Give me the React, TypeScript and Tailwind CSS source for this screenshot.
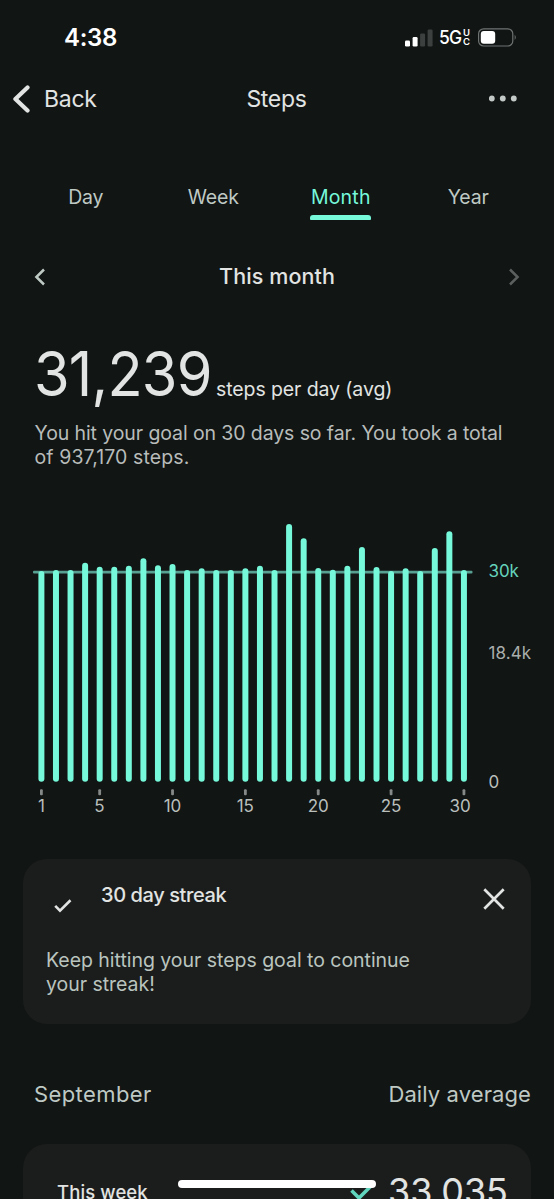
const tops = [
  571, 570, 570, 562.7, 566.7, 566.7, 565.7, 558.3, 565.3, 564, 570, 568.3, 570, 570, 568.3,
  565.7, 570, 524, 538.3, 568, 569.7, 565.7, 547, 567, 571, 568.3, 571, 548, 531.3, 570,
];
const barX = (day: number) => 41.4 + 14.57 * (day - 1);
const dayTicks = [
  { day: 1, x: 41.4 },
  { day: 5, x: 99.5 },
  { day: 10, x: 172.5 },
  { day: 15, x: 245.3 },
  { day: 20, x: 318.2 },
  { day: 25, x: 391 },
  { day: 30, x: 460 },
];

function StatusBar() {
  return (
    <div className="flex h-[75px] items-center justify-between pl-16 pr-[36px]">
      <span className="text-[24px] font-semibold leading-none tracking-[-0.3px] text-white">4:38</span>
      <div className="flex items-center">
        <svg width="28" height="18" viewBox="0 0 28 18">
          <rect x="0" y="11.5" width="5" height="6" rx="1.3" fill="#fff" />
          <rect x="7.6" y="8" width="5" height="9.5" rx="1.3" fill="#fff" />
          <rect x="15.1" y="4.4" width="5" height="13.1" rx="1.3" fill="#3c403f" />
          <rect x="22.6" y="0.5" width="5" height="17" rx="1.3" fill="#3c403f" />
        </svg>
        <span className="ml-[6px] w-6 origin-left scale-x-[0.92] text-[19px] font-medium leading-none tracking-[-0.8px] text-white">5G</span>
        <span className="flex w-2 flex-col text-[9.5px] font-semibold leading-[8.5px] text-white">
          <span>U</span>
          <span>C</span>
        </span>
        <svg className="ml-[7px]" width="40" height="19" viewBox="0 0 40 19">
          <rect x="0.6" y="0.8" width="34.2" height="17.2" rx="5" fill="none" stroke="#6f7372" strokeWidth="1.2" />
          <rect x="2.8" y="3" width="14.4" height="12.8" rx="3" fill="#fff" />
          <path d="M36.7 6.8 Q38.8 9.4 36.7 12Z" fill="#6f7372" />
        </svg>
      </div>
    </div>
  );
}

function Header() {
  return (
    <header className="grid h-12 grid-cols-3 items-center pl-3 pr-[37px] text-[23px] text-[#e1e4e2]">
      <div className="flex items-center">
        <svg width="19" height="28" viewBox="0 0 19 28" fill="none" stroke="#e1e4e2" strokeWidth="4.2" strokeLinecap="round" strokeLinejoin="round">
          <path d="M15.5 2.4 3.4 14 15.5 25.6" />
        </svg>
        <span className="ml-[13px] tracking-[-0.25px]">Back</span>
      </div>
      <span className="-mr-6 text-center tracking-[-0.3px]">Steps</span>
      <svg className="justify-self-end" width="28" height="8" viewBox="0 0 28 8" fill="#c2c9c6">
        <circle cx="2.8" cy="3.5" r="2.9" />
        <circle cx="13.8" cy="3.5" r="2.9" />
        <circle cx="24.8" cy="3.5" r="2.9" />
      </svg>
    </header>
  );
}

function Tabs() {
  return (
    <nav className="mt-[60px] grid h-9 grid-cols-4 px-[22px] text-center text-[19.5px] leading-7 tracking-[-0.15px] text-[#bfc9c4]">
      <span>Day</span>
      <span>Week</span>
      <span className="flex flex-col items-center tracking-[0.2px] text-[#76f8da]">
        Month
        <i className="mt-1 h-[5px] w-[61px] rounded-t-[3px] rounded-b-[1px] bg-[#76f8da]" />
      </span>
      <span>Year</span>
    </nav>
  );
}

function Period() {
  return (
    <div className="mt-[38px] flex h-10 items-center justify-between pl-[34px] pr-[34px]">
      <svg width="12" height="18" viewBox="0 0 12 18" fill="none" stroke="#bfc9c4" strokeWidth="2.5">
        <path d="M10 1.5 2.4 9 10 16.5" />
      </svg>
      <span className="-mt-0.5 text-[21.5px] font-medium tracking-[0.1px] text-[#e1e4e2]">This month</span>
      <svg width="12" height="18" viewBox="0 0 12 18" fill="none" stroke="#5b605e" strokeWidth="2.5">
        <path d="M2 1.5 9.6 9 2 16.5" />
      </svg>
    </div>
  );
}

function Chart() {
  return (
    <svg className="block" width="554" height="320" viewBox="0 510 554 320">
      <rect x="33" y="570.8" width="439.5" height="2.8" rx="1" fill="#579f91" />
      {tops.map((top, index) => (
        <rect key={index} x={barX(index + 1) - 3} y={top} width="6" height={781.7 - top} rx="3" fill="#76f8da" />
      ))}
      {dayTicks.map(({ day, x }) => (
        <g key={day}>
          <rect x={barX(day) - 1.4} y="789.2" width="2.8" height="6" rx="1" fill="#858a88" />
          <text x={x} y="811.6" textAnchor="middle" fontSize="17" fill="#babfbc">{day}</text>
        </g>
      ))}
      <text x="488.4" y="577" fontSize="17" fill="#65d3bb">30k</text>
      <text x="488.4" y="658.5" fontSize="17" letterSpacing="0.1" fill="#a9adab">18.4k</text>
      <text x="488.4" y="787.5" fontSize="17" fill="#babfbc">0</text>
    </svg>
  );
}

function StreakCard() {
  return (
    <section className="mx-[23px] mt-[29px] h-[165px] rounded-[24px] bg-[#1b1d1c] px-[23px] pt-5">
      <div className="flex h-10 items-center">
        <svg className="mt-[14px] ml-2" width="18" height="14" viewBox="0 0 18 14" fill="none" stroke="#e1e4e2" strokeWidth="2.6">
          <path d="M1.2 6.8 6 11.6 16.5 1.3" />
        </svg>
        <h2 className="-mt-2 ml-[29px] text-[20px] font-medium leading-8 tracking-[-0.4px] text-[#e1e4e2]">30 day streak</h2>
        <svg className="ml-auto mr-[3px]" width="22" height="22" viewBox="0 0 22 22" stroke="#e1e4e2" strokeWidth="2.7">
          <path d="M1.3 1.3 20.7 20.7M20.7 1.3 1.3 20.7" />
        </svg>
      </div>
      <p className="mt-[28.5px] text-[19.5px] leading-6 tracking-[-0.03px] text-[#bac4bf]">
        Keep hitting your steps goal to continue<br />your streak!
      </p>
    </section>
  );
}

function WeekCard() {
  return (
    <section className="mx-[23px] mt-[32px] flex h-[90px] items-start rounded-t-[24px] bg-[#1b1d1c] pl-[34px] pr-6">
      <span className="mt-9 text-[18.5px] font-medium leading-6 tracking-[0.1px] text-[#e1e4e2]">This week</span>
      <svg className="mt-[38px] ml-auto" width="25" height="20" viewBox="0 0 25 20" fill="none" stroke="#61d5bd" strokeWidth="3.6">
        <path d="M1.5 8.5 9 16 24 1" />
      </svg>
      <span className="-mr-px ml-[13px] mt-[27px] text-[36px] leading-10 text-[#e1e4e2]">33,035</span>
    </section>
  );
}

export default function App() {
  return (
    <main className="relative h-[1199px] w-[554px] overflow-hidden bg-[#111514] font-['Inter',sans-serif]">
      <StatusBar />
      <Header />
      <Tabs />
      <Period />
      <section className="h-[213px] pl-[34.5px] pt-[42px]">
        <div className="flex h-[74px] items-baseline leading-[70px] text-[#e1e4e2]">
          <span className="-ml-px w-[182.5px] origin-left scale-x-[0.93] text-[62px] tracking-[-0.8px]">31,239</span>
          <span className="text-[19.5px] tracking-[-0.1px]">steps per day (avg)</span>
        </div>
        <p className="mt-[8px] text-[19.5px] leading-6 tracking-[-0.1px] text-[#b8bcba]">
          You hit your goal on 30 days so far. You took a total<br /><span className="tracking-[0.1px]">of 937,170 steps.</span>
        </p>
      </section>
      <Chart />
      <StreakCard />
      <div className="mt-[53px] flex h-[35px] items-center justify-between pl-[34px] pr-[23px] text-[22px] text-[#bfc9c4]">
        <span className="tracking-[0.4px]">September</span>
        <span className="tracking-[0.1px]">Daily average</span>
      </div>
      <WeekCard />
      <div className="absolute left-[178px] top-[1180px] h-2 w-[198px] rounded-full bg-white" />
    </main>
  );
}
